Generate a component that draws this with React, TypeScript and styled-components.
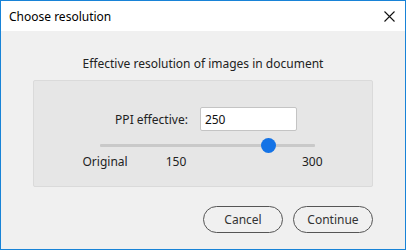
import React, { useState } from "react";
import styled, { createGlobalStyle } from "styled-components";

const GlobalStyle = createGlobalStyle`
  html, body {
    margin: 0;
    padding: 0;
    background: #f0f0f0;
  }
  * {
    box-sizing: border-box;
  }
`;

const MAX = 300;

export default function App() {
  const [ppi, setPpi] = useState(250);

  // track runs from "Original" to 300, 150 sits at its own tick
  const pct = ((ppi - 150) / (MAX - 150)) * 64 + 36;

  return (
    <>
      <GlobalStyle />
      <Window>
        <TitleBar>
          <Title>Choose resolution</Title>
          <CloseButton aria-label="Close">
            <svg width="11" height="11" viewBox="0 0 11 11">
              <path d="M0.5 0.5 L10.5 10.5 M10.5 0.5 L0.5 10.5" stroke="#111" strokeWidth="1.1" fill="none" />
            </svg>
          </CloseButton>
        </TitleBar>

        <Body>
          <Heading>Effective resolution of images in document</Heading>

          <Panel>
            <FieldRow>
              <Label>PPI effective:</Label>
              <Input value={String(ppi)} onChange={(e) => setPpi(Number(e.target.value) || 0)} />
            </FieldRow>

            <SliderBlock>
              <Track>
                <Thumb style={{ left: `${pct}%` }} />
              </Track>
              <Ticks>
                <Tick>Original</Tick>
                <Tick className="mid">150</Tick>
                <Tick className="end">300</Tick>
              </Ticks>
            </SliderBlock>
          </Panel>

          <Buttons>
            <PillButton>Cancel</PillButton>
            <PillButton>Continue</PillButton>
          </Buttons>
        </Body>
      </Window>
    </>
  );
}

const Window = styled.div`
  width: 406px;
  height: 250px;
  display: flex;
  flex-direction: column;
  border: 1px solid #1883d7;
  background: #f0f0f0;
  font-family: "Noto Sans", "Open Sans", sans-serif;
  font-size: 12px;
  color: #1b1b1b;
`;

const TitleBar = styled.div`
  height: 30px;
  flex: none;
  display: flex;
  align-items: center;
  justify-content: space-between;
  padding: 0 10px 0 8px;
  background: #ffffff;
`;

const Title = styled.div`
  font-size: 12px;
  color: #000;
`;

const CloseButton = styled.div`
  width: 11px;
  height: 11px;
  display: flex;
  margin-top: 1px;
`;

const Body = styled.div`
  flex: 1;
  display: flex;
  flex-direction: column;
  padding: 0 32px;
`;

const Heading = styled.div`
  margin-top: 25px;
  line-height: 16px;
  text-align: center;
  color: #222;
`;

const Panel = styled.div`
  margin-top: 8px;
  height: 107px;
  display: flex;
  flex-direction: column;
  align-items: center;
  padding-top: 26px;
  background: #e6e6e6;
  border: 1px solid #dadada;
  border-radius: 2px;
`;

const FieldRow = styled.div`
  display: flex;
  align-items: center;
  gap: 12px;
  margin-left: 6px;
`;

const Label = styled.div`
  color: #222;
`;

const Input = styled.input`
  width: 97px;
  height: 24px;
  padding: 0 4px;
  font-family: inherit;
  font-size: 12px;
  color: #111;
  background: #fff;
  border: 1px solid #c4c4c4;
  border-radius: 2px;
  outline: none;
`;

const SliderBlock = styled.div`
  width: 240px;
  margin-top: 7px;
  margin-right: 1px;
`;

const Track = styled.div`
  position: relative;
  height: 14px;
  margin: 0 8px 0 17px;

  &::before {
    content: "";
    position: absolute;
    left: 0;
    right: 0;
    top: 6px;
    height: 3px;
    background: #c9c9c9;
    border-radius: 1px;
  }
`;

const Thumb = styled.div`
  position: absolute;
  top: 0;
  width: 15px;
  height: 15px;
  margin-left: -8px;
  border-radius: 50%;
  background: #1473e6;
`;

const Ticks = styled.div`
  display: flex;
  margin-top: 2px;
  line-height: 16px;
  color: #222;
`;

const Tick = styled.div`
  &.mid {
    margin-left: 38px;
  }
  &.end {
    margin-left: auto;
  }
`;

const Buttons = styled.div`
  display: flex;
  justify-content: flex-end;
  gap: 10px;
  margin-top: 19px;
`;

const PillButton = styled.button`
  width: 80px;
  height: 27px;
  padding: 0;
  font-family: inherit;
  font-size: 12px;
  color: #333;
  background: #f0f0f0;
  border: 1px solid #555;
  border-radius: 14px;
`;
